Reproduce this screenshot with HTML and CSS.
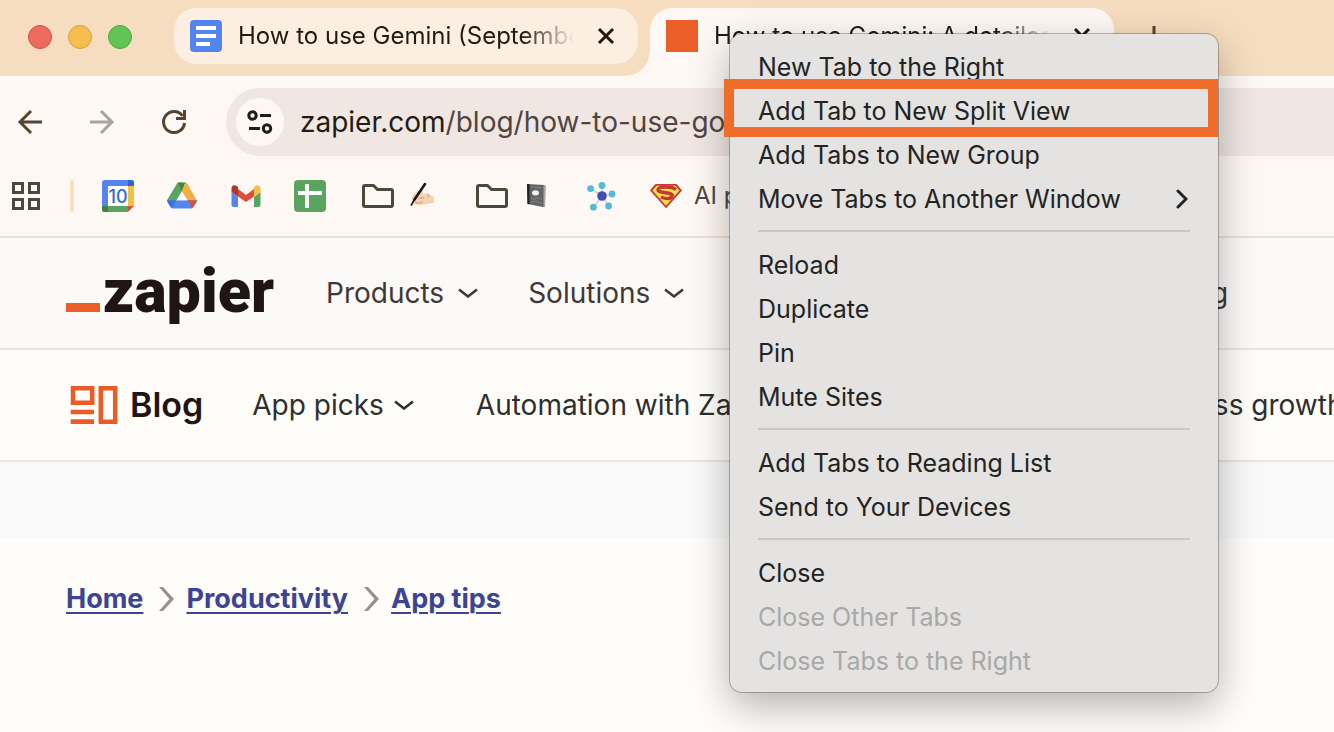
FILE: index.html
```html
<!DOCTYPE html>
<html lang="en">
<head>
<meta charset="utf-8">
<meta name="viewport" content="width=device-width, initial-scale=1">
<title>How to use Gemini: A detailed guide</title>
<link rel="stylesheet" href="styles.css">
</head>
<body>
<header class="browser">
  <div class="tabstrip">
    <div class="lights">
      <button class="light light-close" aria-label="Close window"></button>
      <button class="light light-min" aria-label="Minimize window"></button>
      <button class="light light-max" aria-label="Zoom window"></button>
    </div>
    <div class="tab">
      <svg class="favicon" viewBox="0 0 32 32" aria-hidden="true"><rect width="32" height="32" rx="4" fill="#5484ed"/><path d="M6 6h20v4H6zM6 14h20v4H6zM6 22h14v4H6z" fill="#fff"/></svg>
      <span class="tab-title">How to use Gemini (September update)</span>
      <button class="tab-close" aria-label="Close tab"><svg viewBox="0 0 32 32"><path d="M9 9l14 14M23 9L9 23"/></svg></button>
    </div>
    <div class="tab tab-active">
      <svg class="favicon" viewBox="0 0 32 32" aria-hidden="true"><rect width="32" height="32" fill="#eb5f2b"/></svg>
      <span class="tab-title">How to use Gemini: A detailed guide</span>
      <button class="tab-close" aria-label="Close tab"><svg viewBox="0 0 32 32"><path d="M9 9l14 14M23 9L9 23"/></svg></button>
    </div>
    <button class="new-tab" aria-label="New tab"><svg viewBox="0 0 24 24"><path d="M12 2v20M2 12h20"/></svg></button>
  </div>

  <div class="toolbar">
    <div class="tools">
      <button class="tool" aria-label="Back"><svg viewBox="0 0 24 24"><path d="M24 12H2M13 1L2 12l11 11"/></svg></button>
      <button class="tool tool-off" aria-label="Forward" disabled><svg viewBox="0 0 24 24"><path d="M0 12h22M11 1l11 11-11 11"/></svg></button>
      <button class="tool" aria-label="Reload"><svg viewBox="0 0 24 24"><path d="M22.500 13A10.500 10.500 0 1 1 20.500 5.800"/><path d="M22.500 0v8.500H14"/></svg></button>
    </div>
    <div class="omnibox">
      <button class="site-info" aria-label="View site information"><svg viewBox="0 0 26 24"><circle cx="5.500" cy="5.500" r="3.700"/><path d="M13 5.500h11M2 18.500h11"/><circle cx="20" cy="18.500" r="3.700"/></svg></button>
      <span class="url">zapier.com<span class="url-path">/blog/how-to-use-google-gemini</span></span>
    </div>
  </div>

  <nav class="bookmarks" aria-label="Bookmarks">
    <button class="apps" aria-label="Tab groups"><svg viewBox="0 0 28 28"><path d="M1.500 1.500h9v9h-9zM17.500 1.500h9v9h-9zM1.500 17.500h9v9h-9zM17.500 17.500h9v9h-9z"/></svg></button>
    <span class="divider"></span>
    <div class="marks">
      <a class="mark" href="#" aria-label="Calendar"><svg viewBox="0 0 32 32"><rect width="32" height="32" rx="3" fill="#5484ed"/><path d="M26 0h3a3 3 0 0 1 3 3v3h-6z" fill="#3064c9"/><path d="M26 6h6v20h-6z" fill="#f3bf45"/><path d="M0 26h26v6H3a3 3 0 0 1-3-3z" fill="#59a55f"/><path d="M0 26h6v6H3a3 3 0 0 1-3-3z" fill="#41803f"/><path d="M26 26h6l-6 6z" fill="#dc4f3e"/><path d="M32 26v6h-6z" fill="#fef7f3"/><path d="M6 6h20v20H6z" fill="#fff"/><text x="16" y="23" class="cal-day">10</text></svg></a>
      <a class="mark" href="#" aria-label="Drive"><svg viewBox="0 0 32 32"><path d="M11 3.500Q11.500 2.600 12.500 2.600H16L20 10 16 11.500 5.500 28 1.400 21.500Q.8 20.700 1.300 19.800z" fill="#59a55f"/><path d="M12 2.600h7.500L15.500 11z" fill="#418745"/><path d="M15.500 11L19.500 2.600Q20.600 2.700 21.200 3.600L30.600 20H21.500z" fill="#f0b03f"/><path d="M1.100 20.200h29.800Q31 21 30.400 22L27 27.500Q26.500 28.600 25 28.600H7Q5.700 28.600 5 27.500L1.600 22Q1 21 1.100 20.200z" fill="#5484ed"/><path d="M1.100 20.200H10L5.600 28.200 1.600 22z" fill="#3873df"/><path d="M21.500 20.200h9.400L30.400 22 26.600 28.100z" fill="#dc4f3e"/><path d="M15.800 11.500L21 20.200H10.600z" fill="#fff"/></svg></a>
      <a class="mark" href="#" aria-label="Mail"><svg viewBox="0 0 32 32"><path d="M1.500 12l6.500 5v10H3.500q-2 0-2-2z" fill="#5484ed"/><path d="M30.500 12L24 17v10h4.500q2 0 2-2z" fill="#59a55f"/><path d="M8 9l8 6 8-6v7.500l-8 5.500-8-5.500z" fill="#dc4f3e"/><path d="M8 16.800L1.500 12V8.500C1.500 5 5 4 8 7z" fill="#b2362b"/><path d="M24 16.800l6.500-4.800V8.500c0-3.500-3.500-4.500-6.500-1.500z" fill="#f3bf45"/></svg></a>
      <a class="mark" href="#" aria-label="Sheets"><svg viewBox="0 0 32 32"><rect width="32" height="32" rx="4" fill="#59a55f"/><path d="M4 11h24v4H4zM11 4h4v24h-4z" fill="#fff"/></svg></a>
      <a class="mark mark-folder" href="#" aria-label="Writing folder">
        <svg viewBox="0 0 32 32"><path class="folder" d="M3 5.500h8.500l4 4H29q1.500 0 1.500 1.500v14q0 1.500-1.500 1.500H3q-1.500 0-1.500-1.500V7Q1.500 5.500 3 5.500z"/></svg>
        <svg viewBox="0 0 32 32"><path d="M6 22Q5 17 8 14l5-3.500q3-1.500 4 .500v3l4-.500q3 0 4 2l3 1.500v6q-6 0-10 1.500-8 1.500-12-2.500z" fill="#f3d2b4"/><path d="M9 22.500q4 1.500 8-.500M13 18.500l5-1M21 14q2 1 2 3.500" fill="none" stroke="#c99b78"/><path d="M19 4l-10.500 15.500" stroke="#171717" stroke-width="2.600" stroke-linecap="round"/><path d="M8.500 19.500L5 25.500" stroke="#171717" stroke-width="1.600"/></svg>
      </a>
      <a class="mark mark-folder" href="#" aria-label="Notes folder">
        <svg viewBox="0 0 32 32"><path class="folder" d="M3 5.500h8.500l4 4H29q1.500 0 1.500 1.500v14q0 1.500-1.500 1.500H3q-1.500 0-1.500-1.500V7Q1.500 5.500 3 5.500z"/></svg>
        <svg viewBox="0 0 32 32"><path d="M7 4l17 1 1.500 1-.5 20.500-2 .500L7.500 24z" fill="#636363"/><path d="M7 4l2.500.300V24.300L7.500 24z" fill="#222"/><path d="M23.500 5.500l2 .500-.5 20-1.500.8z" fill="#a9a9a9"/><path d="M11 18l3 1.500 4-2 4 2M11 22l5-.500 6 2M11 7l11 .800" stroke="#858585" fill="none"/><ellipse cx="15.500" cy="12.800" rx="3.500" ry="2.600" fill="#f2f2f2"/></svg>
      </a>
      <a class="mark" href="#" aria-label="Network"><svg viewBox="0 0 32 32"><path d="M16 16V5.500M16 16L4.500 8.500M16 16l10-2M16 16l6.500 10M16 16L7.500 27" stroke="#c9d3dc" stroke-width="1.500"/><g fill="#55bad3"><circle cx="16" cy="5.500" r="3.400"/><circle cx="4.600" cy="8.600" r="3.400"/><circle cx="26" cy="14" r="3.400"/><circle cx="22.600" cy="26" r="3.400"/><circle cx="7.400" cy="27.200" r="3.400"/></g><circle cx="16" cy="16" r="4.800" fill="#4250b0"/></svg></a>
      <a class="mark mark-text" href="#">
        <svg viewBox="0 0 32 32" aria-hidden="true"><path d="M5.500 4h21l5.500 6.500L16 28.300 0 10.500z" fill="#c23b31"/><path d="M6.500 5.800h19l4 4.700L16 25.800 2.500 10.500z" fill="#f6dd4e"/><path d="M26 9.500Q23 7 16 7q-7.500 0-8 2.800-.3 2.200 7.500 2.900 8 .800 6.500 3.800-2.500 4-11 .500" fill="none" stroke="#c23b31" stroke-width="3.400"/></svg>
        <span>AI prompts</span>
      </a>
    </div>
  </nav>
</header>

<div class="site-nav">
  <a class="logo" href="#"><span class="logo-bar"></span><span class="logo-name">zapier</span></a>
  <nav class="links" aria-label="Site">
    <button class="link">Products<svg viewBox="0 0 20 10"><path d="M1 1.500l9 7 9-7"/></svg></button>
    <button class="link">Solutions<svg viewBox="0 0 20 10"><path d="M1 1.500l9 7 9-7"/></svg></button>
    <button class="link">Resources<svg viewBox="0 0 20 10"><path d="M1 1.500l9 7 9-7"/></svg></button>
    <a class="link" href="#">Enterprise</a>
    <a class="link" href="#">Pricing</a>
  </nav>
</div>

<div class="blog-nav">
  <a class="blog-logo" href="#"><svg viewBox="0 0 48 38" aria-hidden="true"><path d="M3 2.300h19.200v14.400H3zM30.800 2.300h14.400v33.400H30.800z" fill="none" stroke="#eb5b27" stroke-width="4.500"/><path d="M.7 23.800H24v4.400H.7zM.7 33.200H24V38H.7z" fill="#eb5b27"/></svg><span>Blog</span></a>
  <nav class="topics" aria-label="Topics">
    <button class="link">App picks<svg viewBox="0 0 20 10"><path d="M1 1.500l9 7 9-7"/></svg></button>
    <button class="link">Automation with Zapier<svg viewBox="0 0 20 10"><path d="M1 1.500l9 7 9-7"/></svg></button>
    <button class="link">Productivity<svg viewBox="0 0 20 10"><path d="M1 1.500l9 7 9-7"/></svg></button>
    <button class="link">Business growth<svg viewBox="0 0 20 10"><path d="M1 1.500l9 7 9-7"/></svg></button>
  </nav>
</div>

<div class="band"></div>

<main class="page">
  <nav class="crumbs" aria-label="Breadcrumb">
    <a href="#">Home</a>
    <svg viewBox="0 0 15 24" aria-hidden="true"><path d="M0 0h4l11 12L4 24H0l10.500-12z"/></svg>
    <a href="#">Productivity</a>
    <svg viewBox="0 0 15 24" aria-hidden="true"><path d="M0 0h4l11 12L4 24H0l10.500-12z"/></svg>
    <a href="#">App tips</a>
  </nav>
</main>

<div class="menu" role="menu">
  <button class="item" role="menuitem">New Tab to the Right</button>
  <button class="item item-marked" role="menuitem">Add Tab to New Split View</button>
  <button class="item" role="menuitem">Add Tabs to New Group</button>
  <button class="item" role="menuitem">Move Tabs to Another Window<svg viewBox="0 0 12 20"><path d="M2 2l8 8-8 8"/></svg></button>
  <hr class="rule">
  <button class="item" role="menuitem">Reload</button>
  <button class="item" role="menuitem">Duplicate</button>
  <button class="item" role="menuitem">Pin</button>
  <button class="item" role="menuitem">Mute Sites</button>
  <hr class="rule">
  <button class="item" role="menuitem">Add Tabs to Reading List</button>
  <button class="item" role="menuitem">Send to Your Devices</button>
  <hr class="rule">
  <button class="item" role="menuitem">Close</button>
  <button class="item" role="menuitem" disabled>Close Other Tabs</button>
  <button class="item" role="menuitem" disabled>Close Tabs to the Right</button>
</div>
</body>
</html>
```

FILE: styles.css
```css
* { box-sizing: border-box; }

body {
  margin: 0;
  min-height: 100vh;
  display: flex;
  flex-direction: column;
  overflow: hidden;
  font-family: Inter, "Liberation Sans", sans-serif;
  background: #fffdf9;
}

button {
  padding: 0;
  border: 0;
  background: none;
  font: inherit;
  color: inherit;
}

a { color: inherit; text-decoration: none; }
svg { display: block; flex: none; }

/* Tab strip */
.browser { background: #fef8f4; border-bottom: 2px solid #efdfd2; }

.tabstrip {
  display: flex;
  align-items: flex-start;
  height: 76px;
  padding: 8px 0 0 28px;
  background: #f7ddbf;
}

.lights { display: flex; gap: 16px; margin-right: 42px; padding-top: 17px; }
.light { width: 24px; height: 24px; border-radius: 50%; border: 1px solid; }
.light-close { background: #ed6a5e; border-color: #d2544a; }
.light-min { background: #f5bf4f; border-color: #d6a03c; }
.light-max { background: #61c554; border-color: #4ea63f; }

.tab {
  position: relative;
  display: flex;
  align-items: center;
  gap: 16px;
  flex: 0 0 464px;
  min-width: 0;
  height: 56px;
  margin-right: 12px;
  padding: 0 16px;
  border-radius: 22px;
  background: #fceee1;
  color: #211b14;
}

.tab-active {
  height: 68px;
  margin-right: 28px;
  padding-bottom: 12px;
  border-radius: 22px 22px 0 0;
  background: #fef8f4;
}

.tab-active::before,
.tab-active::after {
  content: "";
  position: absolute;
  bottom: 0;
  width: 24px;
  height: 24px;
}
.tab-active::before { right: 100%; background: radial-gradient(circle at 0 0, transparent 23px, #fef8f4 24px); }
.tab-active::after { left: 100%; background: radial-gradient(circle at 100% 0, transparent 23px, #fef8f4 24px); }

.favicon { width: 32px; height: 32px; }

.tab-title {
  flex: 1 1 0;
  min-width: 0;
  overflow: hidden;
  white-space: nowrap;
  font-size: 24px;
  line-height: 32px;
  mask-image: linear-gradient(to right, #000 calc(100% - 52px), transparent);
}

.tab-close svg { width: 32px; height: 32px; fill: none; stroke: #211b14; stroke-width: 3; }
.new-tab { padding-top: 16px; }
.new-tab svg { width: 24px; height: 24px; fill: none; stroke: #5a4530; stroke-width: 3; }

/* Address bar */
.toolbar { display: flex; align-items: center; padding: 12px 0 0 18px; }
.tools { display: flex; gap: 48px; margin-right: 40px; }
.tool svg { width: 24px; height: 24px; overflow: visible; fill: none; stroke: #574430; stroke-width: 3; }
.tool-off svg { stroke: #aaa29d; }

.omnibox {
  display: flex;
  align-items: center;
  gap: 16px;
  flex: 1;
  height: 68px;
  padding-left: 10px;
  border-radius: 34px 0 0 34px;
  background: #f0e7e3;
}

.site-info {
  display: grid;
  place-items: center;
  width: 48px;
  height: 48px;
  border-radius: 50%;
  background: #fef8f4;
}
.site-info svg { width: 26px; height: 24px; fill: none; stroke: #211b14; stroke-width: 3; }

.url { font-size: 28px; line-height: 36px; color: #211b14; white-space: nowrap; }
.url-path { color: #504540; }

/* Bookmarks */
.bookmarks { display: flex; align-items: center; height: 80px; padding-left: 12px; color: #4f473f; }
.apps svg { width: 28px; height: 28px; fill: none; stroke: #4d483b; stroke-width: 3; }
.divider { width: 4px; height: 32px; margin: 0 28px 0 30px; border-radius: 2px; background: #fbdebe; }
.marks { display: flex; align-items: center; gap: 32px; }
.mark svg { width: 32px; height: 32px; }
.mark-folder { display: flex; gap: 12px; padding: 0 2px 0 4px; }
.mark-text { display: flex; align-items: center; gap: 12px; font-size: 24px; line-height: 32px; white-space: nowrap; }
.folder { fill: none; stroke: #4d483b; stroke-width: 3; }
.cal-day { font-family: Inter, sans-serif; font-size: 18px; font-weight: 500; text-anchor: middle; fill: #3569cf; }

/* Site navigation */
.site-nav,
.blog-nav {
  display: flex;
  align-items: center;
  height: 112px;
  border-bottom: 2px solid #e8e7dd;
  white-space: nowrap;
  font-size: 28px;
  line-height: 36px;
}
.site-nav { padding-left: 66px; background: #fbfaf9; color: #413735; }
.blog-nav { padding-left: 70px; background: #fffdf9; color: #2d2f2e; }

.logo {
  display: flex;
  align-items: baseline;
  gap: 3px;
  width: 208px;
  margin-right: 52px;
  padding-bottom: 4px;
}
.logo-bar { width: 34px; height: 9px; background: #eb5f2b; }
.logo-name { font-family: Roboto, "Liberation Sans", sans-serif; font-weight: 900; font-size: 61px; line-height: 61px; color: #201515; }

.links { display: flex; gap: 50px; }
.link { display: flex; align-items: center; flex: none; gap: 14px; }
.links .link:last-child { margin-left: -7px; }
.link svg { width: 20px; height: 10px; fill: none; stroke: currentColor; stroke-width: 2.5; }

.blog-logo { display: flex; align-items: center; gap: 12px; width: 134px; margin-right: 49px; color: #201515; font-size: 34px; font-weight: 600; }
.blog-logo svg { width: 48px; height: 38px; }
.topics { display: flex; gap: 62px; }
.topics .link { gap: 10px; }

.band { height: 76px; background: #f9f9fa; }

/* Page */
.page { flex: 1; padding: 43px 66px; }
.crumbs { display: flex; align-items: center; font-size: 27px; line-height: 36px; font-weight: 700; color: #3d4592; }
.crumbs a { text-decoration: underline; text-decoration-thickness: 2px; text-underline-offset: 4px; }
.crumbs svg { width: 15px; height: 24px; margin: 0 12px 0 16px; fill: #95928e; }

/* Context menu */
.menu {
  position: absolute;
  top: 34px;
  left: 730px;
  width: 488px;
  padding: 11px 0 9px;
  border-radius: 12px;
  background: #e4e3e1;
  box-shadow: 0 0 0 1px rgba(0, 0, 0, 0.25), 0 14px 40px rgba(0, 0, 0, 0.3);
  color: #232323;
}

.item {
  position: relative;
  display: flex;
  align-items: center;
  justify-content: space-between;
  width: 100%;
  height: 44px;
  padding: 0 30px 0 28px;
  font-size: 25px;
  line-height: 32px;
  text-align: left;
}
.item:disabled { color: #a9a8a7; }
.item svg { width: 12px; height: 20px; fill: none; stroke: #232323; stroke-width: 3; stroke-linecap: round; }

.item-marked::after {
  content: "";
  position: absolute;
  inset: -10px 0 -4px -6px;
  z-index: 1;
  border: 10px solid #ef6d2b;
}

.rule { height: 2px; margin: 9px 28px 11px; border: 0; background: #c9c8c6; }
```
